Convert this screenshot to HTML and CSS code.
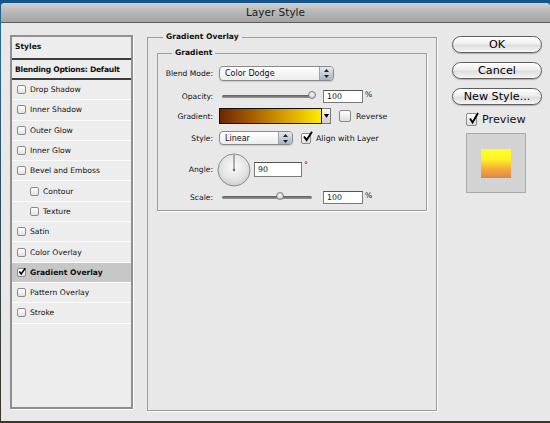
FILE: index.html
```html
<!DOCTYPE html>
<html>
  <head>
    <link rel="stylesheet" href="styles.css">
  </head>
  <body>
    <div class="window">
      <div class="titlebar">Layer Style</div>
      <div class="content">

        <div class="styles-list">
          <div class="styles-head">Styles</div>
          <div class="styles-blend">Blending Options: Default</div>
          <div class="style-item"><span class="box"></span>Drop Shadow</div>
          <div class="style-item"><span class="box"></span>Inner Shadow</div>
          <div class="style-item"><span class="box"></span>Outer Glow</div>
          <div class="style-item"><span class="box"></span>Inner Glow</div>
          <div class="style-item"><span class="box"></span>Bevel and Emboss</div>
          <div class="style-item sub"><span class="box"></span>Contour</div>
          <div class="style-item sub"><span class="box"></span>Texture</div>
          <div class="style-item"><span class="box"></span>Satin</div>
          <div class="style-item"><span class="box"></span>Color Overlay</div>
          <div class="style-item selected"><span class="box"><svg width="9" height="9" viewBox="0 0 9 9"><path d="M1.5 4.5 L3.6 7.2 L8.2 0.8" fill="none" stroke="#000" stroke-width="1.7"/></svg></span>Gradient Overlay</div>
          <div class="style-item"><span class="box"></span>Pattern Overlay</div>
          <div class="style-item"><span class="box"></span>Stroke</div>
        </div>

        <fieldset class="group group-outer">
          <legend>Gradient Overlay</legend>
          <fieldset class="group group-inner">
            <legend>Gradient</legend>

            <div class="field field-blend">
              <label>Blend Mode:</label>
              <div class="select select-blend">
                <span class="select-text">Color Dodge</span>
                <span class="stepper"><svg width="5" height="9" viewBox="0 0 5 9"><path d="M2.5 0 L5 3 L0 3 Z M0 6 L5 6 L2.5 9 Z" fill="#222"/></svg></span>
              </div>
            </div>

            <div class="field field-opacity">
              <label>Opacity:</label>
              <div class="slider"><div class="track"></div><div class="thumb" style="left: 89px"></div></div>
              <input class="num" type="text" value="100">
              <span class="unit">%</span>
            </div>

            <div class="field field-gradient">
              <label>Gradient:</label>
              <div class="gradient-bar"></div>
              <div class="gradient-drop"><svg width="5" height="4" viewBox="0 0 5 4"><path d="M0 0 L5 0 L2.5 4 Z" fill="#000"/></svg></div>
              <span class="check check-reverse"></span>
              <span class="check-label">Reverse</span>
            </div>

            <div class="field field-style">
              <label>Style:</label>
              <div class="select select-style">
                <span class="select-text">Linear</span>
                <span class="stepper"><svg width="5" height="9" viewBox="0 0 5 9"><path d="M2.5 0 L5 3 L0 3 Z M0 6 L5 6 L2.5 9 Z" fill="#222"/></svg></span>
              </div>
              <span class="check check-align"><svg width="11" height="11" viewBox="0 0 11 11"><path d="M2 5.5 L4.6 9 L10 0.8" fill="none" stroke="#000" stroke-width="1.9"/></svg></span>
              <span class="check-label">Align with Layer</span>
            </div>

            <div class="field field-angle">
              <label>Angle:</label>
              <svg class="dial" width="34" height="34" viewBox="0 0 34 34">
                <defs>
                  <radialGradient id="dialFill" cx="50%" cy="40%" r="60%">
                    <stop offset="0" stop-color="#fbfbfb"/>
                    <stop offset="0.7" stop-color="#e2e2e2"/>
                    <stop offset="1" stop-color="#cdcdcd"/>
                  </radialGradient>
                </defs>
                <circle cx="17" cy="17" r="16" fill="url(#dialFill)" stroke="#8c8c8c" stroke-width="1"/>
                <line x1="17" y1="17" x2="17" y2="2" stroke="#666" stroke-width="1"/>
                <circle cx="17" cy="17" r="1.2" fill="#666"/>
              </svg>
              <input class="num num-angle" type="text" value="90">
              <span class="degree">°</span>
            </div>

            <div class="field field-scale">
              <label>Scale:</label>
              <div class="slider"><div class="track"></div><div class="thumb" style="left: 57px"></div></div>
              <input class="num" type="text" value="100">
              <span class="unit">%</span>
            </div>

          </fieldset>
        </fieldset>

        <div class="actions">
          <button class="btn">OK</button>
          <button class="btn">Cancel</button>
          <button class="btn">New Style...</button>
          <div class="preview-toggle">
            <span class="check check-preview"><svg width="11" height="13" viewBox="0 0 11 13"><path d="M2 6.5 L4.6 10.5 L10 1" fill="none" stroke="#000" stroke-width="1.9"/></svg></span>
            <span>Preview</span>
          </div>
          <div class="preview-box">
            <div class="swatch"></div>
          </div>
        </div>

      </div>
    </div>
  </body>
</html>
```

FILE: styles.css
```css
* {
  box-sizing: border-box;
}
body {
  margin: 0;
  height: 423px;
  overflow: hidden;
  background: linear-gradient(#12548a, #2a6c96 6%, #2d4b5c 50%, #3d3424);
  font-family: "DejaVu Sans", sans-serif;
  color: #111;
}
.window {
  margin: 3px 0 0 1px;
  height: 418px;
  background: #e8e8e8;
  border-radius: 4px 4px 0 0;
  overflow: hidden;
}
.titlebar {
  height: 20px;
  border-bottom: 1px solid #5c5c5c;
  background: linear-gradient(#d0d0d0, #b6b6b6 50%, #a4a4a4);
  text-align: center;
  font-size: 10.5px;
  line-height: 19px;
  color: #1b1b1b;
}
.content {
  display: flex;
  align-items: flex-start;
  padding-left: 9px;
}

/* styles list on the left */
.styles-list {
  width: 123px;
  height: 374px;
  margin-top: 12px;
  background: #ededed;
  border: 2px solid #8f8f8f;
  box-shadow: 1px 1px 0 #fff;
  font-size: 7.6px;
}
.styles-head {
  height: 23px;
  display: flex;
  align-items: center;
  padding: 0 0 3px 3px;
  border-bottom: 2px solid #3c3c3c;
  font-weight: bold;
}
.styles-blend {
  height: 20px;
  display: flex;
  align-items: center;
  padding-left: 3px;
  border-bottom: 2px solid #3c3c3c;
  font-weight: bold;
  letter-spacing: -0.25px;
}
.style-item {
  height: 20.3px;
  display: flex;
  align-items: center;
  padding-left: 5px;
  border-bottom: 1px solid #fbfbfb;
}
.style-item.sub {
  padding-left: 18px;
}
.style-item.selected {
  background: #c7c7c7;
  font-weight: bold;
}
.box {
  width: 9px;
  height: 9px;
  margin-right: 4px;
  border: 1px solid #8a8a8a;
  border-radius: 2px;
  background: linear-gradient(#fff, #e2e2e2);
  display: flex;
  align-items: center;
  justify-content: center;
}
.box svg {
  margin: -2px -1px 0 0;
}

/* group boxes */
.group {
  margin: 0;
  min-inline-size: 0;
  border: 1px solid #9c9c9c;
  box-shadow: 1px 1px 0 #fdfdfd;
}
.group legend {
  padding: 0 3px;
  font-size: 7.6px;
  font-weight: bold;
  line-height: 12px;
}
.group-outer {
  width: 290px;
  height: 380px;
  margin-left: 14px;
  margin-top: 8px;
  padding: 4px 9px 0 9px;
}
.group-outer > legend {
  margin-left: 6px;
}
.group-inner {
  padding: 3px 9px 4px 2px;
}
.group-inner > legend {
  margin-left: 12px;
}

.field {
  display: flex;
  align-items: center;
  font-size: 7.6px;
}
.field label {
  width: 53px;
  margin-right: 6px;
  text-align: right;
  flex-shrink: 0;
}
.field-blend { height: 23px; }
.field-opacity { height: 22px; }
.field-gradient { height: 18px; }
.field-style { height: 26px; }
.field-angle { height: 37px; }
.field-scale { height: 18px; }

.select {
  display: flex;
  align-items: stretch;
  border: 1px solid #8a8a8a;
  border-radius: 4px;
  background: linear-gradient(#fff, #ececec);
  box-shadow: 0 1px 1px rgba(0, 0, 0, 0.15);
  font-size: 8px;
}
.select-blend {
  width: 115px;
  height: 15px;
}
.select-style {
  width: 74px;
  height: 14px;
}
.select-text {
  padding-left: 5px;
  align-self: center;
}
.stepper {
  margin-left: auto;
  width: 14px;
  border-left: 1px solid #9aa4b0;
  border-radius: 0 3px 3px 0;
  background: linear-gradient(#e4eaf0, #a9b5c3);
  display: flex;
  align-items: center;
  justify-content: center;
}

.slider {
  position: relative;
  width: 96px;
  height: 10px;
  flex-shrink: 0;
}
.track {
  margin: 4px 3px 0 3px;
  height: 3px;
  border-radius: 2px;
  background: linear-gradient(#5c5c5c, #9a9a9a);
}
.thumb {
  position: absolute;
  top: 0;
  width: 8px;
  height: 8px;
  border: 1px solid #7c7c7c;
  border-radius: 50%;
  background: radial-gradient(circle at 50% 35%, #fafafa, #b8bcc2);
}

.num {
  width: 40px;
  height: 13px;
  margin: 0 0 0 8px;
  padding: 0 0 0 3px;
  border: 1px solid #7a7a7a;
  border-top-color: #555;
  background: #fff;
  font-family: "DejaVu Sans", sans-serif;
  font-size: 7.8px;
  color: #111;
}
.unit {
  margin-left: 2px;
  margin-top: -3px;
}
.num-angle {
  width: 48px;
  height: 15px;
  margin-left: 3px;
}
.degree {
  margin-left: 2px;
  align-self: flex-start;
  margin-top: 9px;
}
.dial {
  margin-left: -2px;
}

.gradient-bar {
  width: 103px;
  height: 16px;
  border: 1px solid #111;
  background: linear-gradient(90deg, #6a2800, #a55a00 30%, #d8a000 65%, #ffec00);
}
.gradient-drop {
  width: 9px;
  height: 16px;
  border: 1px solid #777;
  border-left: none;
  background: linear-gradient(#fafafa, #cfcfcf);
  display: flex;
  align-items: center;
  justify-content: center;
}
.check {
  display: flex;
  align-items: center;
  justify-content: center;
  border: 1px solid #888;
  border-radius: 2px;
  background: linear-gradient(#fff, #dedede);
}
.check-reverse {
  width: 12px;
  height: 12px;
  margin-left: 8px;
}
.check-align {
  width: 10px;
  height: 11px;
  margin-left: 8px;
}
.check-align svg {
  margin: -3px -3px 0 0;
}
.check-label {
  margin-left: 5px;
  font-size: 7.8px;
}

/* buttons and preview */
.actions {
  width: 90px;
  margin-left: 15px;
  margin-top: 13px;
  display: flex;
  flex-direction: column;
}
.btn {
  height: 17px;
  padding: 0;
  border: 1px solid #5f5f5f;
  border-radius: 9px;
  background: linear-gradient(#fefefe, #eeeeee 45%, #dedede 55%, #f5f5f5);
  box-shadow: 0 1px 1px rgba(0, 0, 0, 0.25);
  font-family: "DejaVu Sans", sans-serif;
  font-size: 11.2px;
  line-height: 15px;
  color: #000;
}
.btn + .btn {
  margin-top: 9px;
}
.preview-toggle {
  height: 17px;
  margin-top: 6px;
  padding-left: 14px;
  display: flex;
  align-items: center;
  font-size: 11.2px;
}
.check-preview {
  width: 11px;
  height: 13px;
  margin-right: 5px;
}
.check-preview svg {
  margin: -3px -3px 0 0;
}
.preview-box {
  width: 60px;
  height: 60px;
  margin: 5px 0 0 14px;
  border: 1px solid #a8a8a8;
  background: #d3d3d3;
  display: flex;
  align-items: center;
  justify-content: center;
}
.swatch {
  width: 30px;
  height: 29px;
  background: linear-gradient(#ffff22, #fff22a 35%, #f6a83a 70%, #d9864a);
}
```
